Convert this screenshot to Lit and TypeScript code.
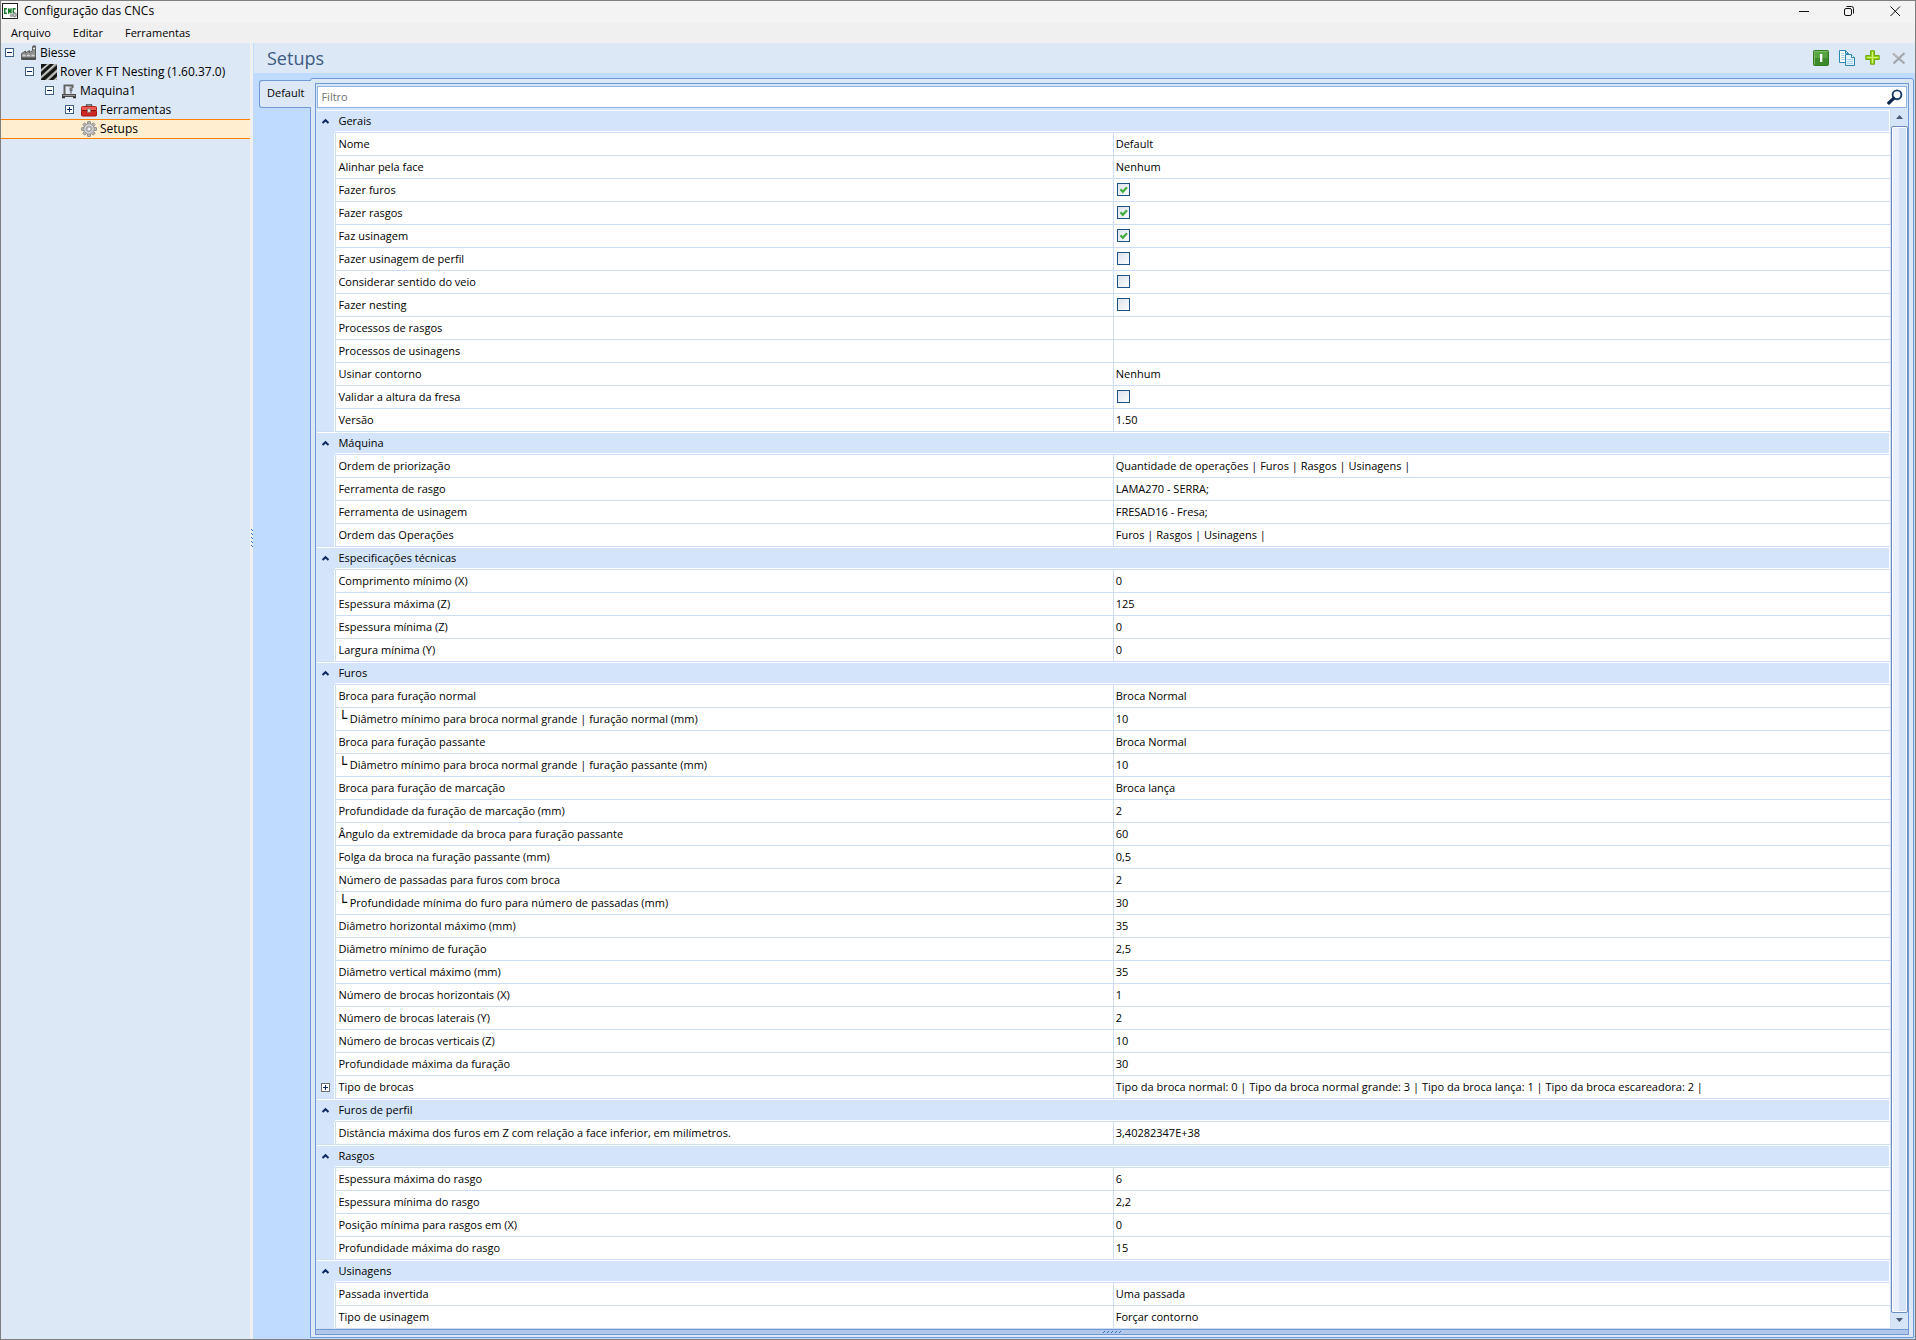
import { LitElement, html, css, svg, nothing } from "lit";
import { customElement, property, state } from "lit/decorators.js";
import { classMap } from "lit/directives/class-map.js";

type Value = string | boolean;
interface Row {
  name: string;
  value: Value;
  expandable?: boolean;
}
interface Group {
  title: string;
  rows: Row[];
}

const r = (name: string, value: Value = "", expandable = false): Row => ({ name, value, expandable });

const GROUPS: Group[] = [
  {
    title: "Gerais",
    rows: [
      r("Nome", "Default"),
      r("Alinhar pela face", "Nenhum"),
      r("Fazer furos", true),
      r("Fazer rasgos", true),
      r("Faz usinagem", true),
      r("Fazer usinagem de perfil", false),
      r("Considerar sentido do veio", false),
      r("Fazer nesting", false),
      r("Processos de rasgos"),
      r("Processos de usinagens"),
      r("Usinar contorno", "Nenhum"),
      r("Validar a altura da fresa", false),
      r("Versão", "1.50"),
    ],
  },
  {
    title: "Máquina",
    rows: [
      r("Ordem de priorização", "Quantidade de operações | Furos | Rasgos | Usinagens |"),
      r("Ferramenta de rasgo", "LAMA270 - SERRA;"),
      r("Ferramenta de usinagem", "FRESAD16 - Fresa;"),
      r("Ordem das Operações", "Furos | Rasgos | Usinagens |"),
    ],
  },
  {
    title: "Especificações técnicas",
    rows: [
      r("Comprimento mínimo (X)", "0"),
      r("Espessura máxima (Z)", "125"),
      r("Espessura mínima (Z)", "0"),
      r("Largura mínima (Y)", "0"),
    ],
  },
  {
    title: "Furos",
    rows: [
      r("Broca para furação normal", "Broca Normal"),
      r("└ Diâmetro mínimo para broca normal grande | furação normal (mm)", "10"),
      r("Broca para furação passante", "Broca Normal"),
      r("└ Diâmetro mínimo para broca normal grande | furação passante (mm)", "10"),
      r("Broca para furação de marcação", "Broca lança"),
      r("Profundidade da furação de marcação (mm)", "2"),
      r("Ângulo da extremidade da broca para furação passante", "60"),
      r("Folga da broca na furação passante (mm)", "0,5"),
      r("Número de passadas para furos com broca", "2"),
      r("└ Profundidade mínima do furo para número de passadas (mm)", "30"),
      r("Diâmetro horizontal máximo (mm)", "35"),
      r("Diâmetro mínimo de furação", "2,5"),
      r("Diâmetro vertical máximo (mm)", "35"),
      r("Número de brocas horizontais (X)", "1"),
      r("Número de brocas laterais (Y)", "2"),
      r("Número de brocas verticais (Z)", "10"),
      r("Profundidade máxima da furação", "30"),
      r(
        "Tipo de brocas",
        "Tipo da broca normal: 0 | Tipo da broca normal grande: 3 | Tipo da broca lança: 1 | Tipo da broca escareadora: 2 |",
        true,
      ),
    ],
  },
  {
    title: "Furos de perfil",
    rows: [r("Distância máxima dos furos em Z com relação a face inferior, em milímetros.", "3,40282347E+38")],
  },
  {
    title: "Rasgos",
    rows: [
      r("Espessura máxima do rasgo", "6"),
      r("Espessura mínima do rasgo", "2,2"),
      r("Posição mínima para rasgos em (X)", "0"),
      r("Profundidade máxima do rasgo", "15"),
    ],
  },
  {
    title: "Usinagens",
    rows: [r("Passada invertida", "Uma passada"), r("Tipo de usinagem", "Forçar contorno")],
  },
];

/* ---------- icons, all on a 16 x 16 grid ---------- */

const GEAR_TEETH = [0, 45, 90, 135, 180, 225, 270, 315];

const ICONS = {
  app: svg`
    <rect x=".5" y=".5" width="15" height="15" fill="#fff" stroke="#222"/>
    <path d="M5 5.700H2.700v4.600H5M6.700 10.700V5.600l2.300 4.600V5.300M13.600 5.700h-2.300v4.200h2" fill="none" stroke="#157a2b" stroke-width="1.400"/>
    <circle cx="9.500" cy="12.400" r="1.700" fill="#aaa"/>
    <circle cx="12.600" cy="12" r="2.400" fill="#999"/><circle cx="12.600" cy="12" r=".8" fill="#eee"/>`,
  factory: svg`
    <path d="M.5 14.500V8.500l4-2.500v2l4-2.500v2l3-1.800V1.500h3v13z" fill="#909090" stroke="#5c5c5c"/>
    <path d="M1.500 10.500h3M6 10.500h3M10.500 10.500h3" stroke="#d8d8d8" stroke-width="1.500"/>
    <path d="M1 13.500h14" stroke="#4a4a4a" stroke-width="2"/>
    <path d="M12 3.500h2" stroke="#f0f0f0"/><path d="M12 .6h2.800" stroke="#888"/>`,
  stripes: svg`
    <rect width="16" height="16" fill="#9aa09a"/>
    <path d="M0 0h6L0 5zM0 8 9 0h4L0 12zM0 15 16 1v4L4 16H0zM8 16 16 8.500v4L12 16z" fill="#151515"/>
    <path d="M0 6.500 7.500 0M0 13 14.500 0M6 16 16 6.800M14 16l2-1.800" stroke="#e4e8e4" stroke-width=".8"/>`,
  machine: svg`
    <path d="M3.500 12V2.500h8V5" fill="none" stroke="#626262" stroke-width="2"/>
    <path d="M5 3.500h1.500V11H5z" fill="#e9e9e9"/>
    <rect x="8.500" y="4.500" width="3" height="3.500" fill="#777"/><path d="M10 8v2.500" stroke="#444"/>
    <rect x="1.500" y="11.500" width="13" height="2" fill="#9a9a9a" stroke="#4c4c4c"/>
    <path d="M1 14.500h3M12 14.500h3" stroke="#333" stroke-width="1.500"/>`,
  toolbox: svg`
    <path d="M5.500 5V2.800h5V5" fill="none" stroke="#4b4b4b" stroke-width="1.300"/>
    <rect x=".5" y="4.500" width="15" height="4.500" rx="1" fill="#ee5b52" stroke="#b3221f"/>
    <rect x=".5" y="8.500" width="15" height="5.500" rx="1" fill="#cf2823" stroke="#951a18"/>
    <path d="M1 8.600h14" stroke="#7f1412"/>
    <rect x="6.500" y="7" width="3" height="3.200" fill="#e8e8e8" stroke="#777" stroke-width=".7"/>`,
  gear: svg`
    ${GEAR_TEETH.map(
      (a) => svg`<rect x="6.500" y=".5" width="3" height="4" rx=".5" fill="#b9b9b9" stroke="#858585" stroke-width=".8" transform="rotate(${a} 8 8)"/>`,
    )}
    <circle cx="8" cy="8" r="5.200" fill="#bdbdbd" stroke="#8a8a8a" stroke-width=".8"/>
    <circle cx="8" cy="8" r="4" fill="none" stroke="#d4d4d4" stroke-width="1.400"/>
    <circle cx="8" cy="8" r="2.200" fill="#f1f3f7" stroke="#858585" stroke-width=".9"/>`,
  info: svg`
    <rect x=".5" y=".5" width="15" height="15" rx="1" fill="#3c8a2a" stroke="#2f7d1f"/>
    <rect x="1.500" y="1.500" width="13" height="6.500" fill="#58a344"/>
    <path d="M1.500 14.500v-13h13" fill="none" stroke="#8ac47a" stroke-width=".8"/>
    <rect x="7" y="4" width="2.300" height="8" fill="#fff"/>`,
  copy: svg`
    <path d="M.5.5h6l3 3v9h-9z" fill="#fff" stroke="#2a87b5"/>
    <path d="M6.500.5v3h3" fill="none" stroke="#2a87b5"/>
    <path d="M2 3.500h3M2 5.500h4M2 7.500h4M2 9.500h4" fill="none" stroke="#a9d5ea"/>
    <path d="M6.500 4.500h6l3 3v8h-9z" fill="#e3f2fa" stroke="#2a87b5"/>
    <path d="M12.500 4.500v3h3" fill="#fff" stroke="#2a87b5"/>
    <path d="M8 9.500h6M8 11.500h6M8 13.500h6" stroke="#a9d5ea"/>`,
  plus: svg`
    <path d="M5.500.8h4v4.700h4.700v4H9.500v4.700h-4V9.500H.8v-4h4.700z" fill="#93cf12" stroke="#6aa80c"/>
    <path d="M7.500 1.800v11.500M1.800 7.500h11.500" stroke="#d2f07a" stroke-width="1.200"/>`,
  remove: svg`
    <path d="M2 3.500 13.500 13.500M13.500 3 2.500 13.500" stroke="#a3a7ad" stroke-width="2.300"/>
    <path d="M2.500 3.500 7 7.500" stroke="#c3c7cd" stroke-width="1"/>`,
  search: svg`
    <circle cx="10" cy="5.800" r="4.400" fill="#fff" stroke="#1b3a66" stroke-width="1.900"/>
    <path d="M6.700 9.300 1.800 14" stroke="#10284c" stroke-width="3.200" stroke-linecap="round"/>`,
  minimize: svg`<path d="M4 8.500h10" stroke="#111"/>`,
  restore: svg`
    <rect x="3.500" y="5.500" width="7" height="7" rx="1.500" fill="none" stroke="#111"/>
    <path d="M5.500 3.500h5a2 2 0 0 1 2 2v5" fill="none" stroke="#111"/>`,
  close: svg`<path d="M3.500 3.500l9.500 9.500M13 3.500 3.500 13" stroke="#111"/>`,
};

type IconName = keyof typeof ICONS;

const icon = (name: IconName) =>
  html`<svg class="icon" viewBox="0 0 16 16" width="16" height="16" aria-hidden="true">${ICONS[name]}</svg>`;

const expander = (open: boolean) => html`
  <svg class="expander" viewBox="0 0 9 9" width="9" height="9" aria-hidden="true">
    <rect x=".5" y=".5" width="8" height="8" fill="#fff" stroke="currentColor" />
    <path d=${open ? "M2 4.500h5" : "M2 4.500h5M4.500 2v5"} stroke="#0b2a5c" fill="none" />
  </svg>
`;

const shared = css`
  * {
    box-sizing: border-box;
  }
  button {
    margin: 0;
    padding: 0;
    border: 0;
    background: none;
    font: inherit;
    color: inherit;
    text-align: left;
  }
  .icon,
  .expander {
    display: block;
    flex: none;
  }
`;

/* ---------- navigation tree ---------- */

interface Node {
  label: string;
  icon: IconName;
  level: number;
  open?: boolean;
}

const NODES: Node[] = [
  { label: "Biesse", icon: "factory", level: 0, open: true },
  { label: "Rover K FT Nesting (1.60.37.0)", icon: "stripes", level: 1, open: true },
  { label: "Maquina1", icon: "machine", level: 2, open: true },
  { label: "Ferramentas", icon: "toolbox", level: 3, open: false },
  { label: "Setups", icon: "gear", level: 3 },
];

@customElement("nav-tree")
export class NavTree extends LitElement {
  @state() private selected = "Setups";

  static styles = [
    shared,
    css`
      :host {
        display: block;
        background: #dde8f6;
      }
      .tree {
        margin: 0;
        padding: 0;
        list-style: none;
      }
      .node {
        display: flex;
        align-items: center;
        gap: 3px;
        width: 100%;
        height: 19px;
        padding-left: 4px;
        white-space: nowrap;
      }
      .selected {
        height: 20px;
        background: #ffefd0;
        border: solid #ff8000;
        border-width: 1px 0;
      }
      .toggle {
        width: 13px;
        color: #3d6186;
      }
      .l1 {
        padding-left: 24px;
      }
      .l2 {
        padding-left: 44px;
      }
      .l3 {
        padding-left: 64px;
      }
    `,
  ];

  render() {
    return html`<ul class="tree" role="tree">
      ${NODES.map(
        (n) => html`<li role="none">
          <button
            role="treeitem"
            aria-selected=${n.label === this.selected}
            class=${classMap({ node: true, [`l${n.level}`]: true, selected: n.label === this.selected })}
            @click=${() => (this.selected = n.label)}
          >
            <span class="toggle">${n.open === undefined ? nothing : expander(n.open)}</span>
            ${icon(n.icon)}
            <span>${n.label}</span>
          </button>
        </li>`,
      )}
    </ul>`;
  }
}

/* ---------- property grid ---------- */

@customElement("property-grid")
export class PropertyGrid extends LitElement {
  @property({ attribute: false }) groups: Group[] = [];
  @state() private closed = new Set<string>();

  static styles = [
    shared,
    css`
      :host {
        display: block;
        background: #fff;
        font-size: 11px;
        line-height: 16px;
      }
      table {
        width: 100%;
        table-layout: fixed;
        border-collapse: separate;
        border-spacing: 0;
      }
      .gutter-col {
        width: 18px;
      }
      th,
      td {
        height: 23px;
        padding: 0;
        font-weight: normal;
        text-align: left;
        white-space: nowrap;
        border-bottom: 1px solid #ccddf4;
      }
      .gutter {
        background: #d4e5fb;
        border-right: 1px solid #fff;
        border-bottom-color: #d4e5fb;
      }
      .gutter button,
      .gutter .expander {
        display: block;
        margin-left: 4px;
        color: #6c6c6c;
      }
      .chevron {
        display: block;
      }
      .group {
        background: #d4e5fb;
        box-shadow: inset 0 1px #fff;
      }
      .group-title {
        border-right: 1px solid #fff;
        box-shadow:
          inset 0 1px #fff,
          inset 0 -1px #fff;
        padding-left: 3px;
      }
      .group.gutter {
        border-right: 0;
      }
      .name,
      .value {
        border-left: 1px solid #ccddf4;
        padding-left: 2px;
      }
      .last {
        border-bottom-color: #ccddf4;
      }
      .corner {
        font: 14px/1 "DejaVu Sans", sans-serif;
      }
      input {
        appearance: none;
        display: block;
        width: 13px;
        height: 13px;
        margin: 0;
        border: 1px solid #1d5287;
        background: linear-gradient(135deg, #dde2ec, #fbfcfd);
      }
      .check {
        display: grid;
        justify-content: start;
        padding: 0 0 1px 1px;
      }
      .check > * {
        grid-area: 1 / 1;
      }
      .tick {
        display: block;
        pointer-events: none;
      }
    `,
  ];

  private toggle(title: string) {
    const next = new Set(this.closed);
    if (!next.delete(title)) next.add(title);
    this.closed = next;
  }

  private renderName(row: Row, id: string) {
    if (typeof row.value === "boolean") return html`<label for=${id}>${row.name}</label>`;
    if (row.name.startsWith("└")) return html`<span class="corner">└</span>${row.name.slice(1)}`;
    return row.name;
  }

  private renderValue(row: Row, id: string) {
    if (typeof row.value === "string") return row.value;
    return html`<span class="check"
      ><input type="checkbox" id=${id} .checked=${row.value} />${row.value
        ? html`<svg class="tick" width="13" height="13" viewBox="0 0 13 13" aria-hidden="true">
            <path d="M3.500 6.300 5.800 8.800 10 4.200" fill="none" stroke="#43ad3f" stroke-width="2.200" />
          </svg>`
        : nothing}</span
    >`;
  }

  render() {
    return html`<table>
      <colgroup>
        <col class="gutter-col" />
        <col />
        <col />
      </colgroup>
      ${this.groups.map((g, gi) => {
        const open = !this.closed.has(g.title);
        return html`<tbody>
          <tr>
            <td class="group gutter">
              <button aria-label=${g.title} aria-expanded=${open} @click=${() => this.toggle(g.title)}>
                <svg class="chevron" viewBox="0 0 9 9" width="9" height="9" aria-hidden="true">
                  <path
                    d=${open ? "M1.500 6 4.500 3.200 7.500 6" : "M1.500 3.200 4.500 6 7.500 3.200"}
                    fill="none"
                    stroke="#0b2a66"
                    stroke-width="2"
                  />
                </svg>
              </button>
            </td>
            <th class="group group-title" colspan="2" scope="rowgroup">${g.title}</th>
          </tr>
          ${open
            ? g.rows.map((row, ri) => {
                const id = `p${gi}-${ri}`;
                const last = ri === g.rows.length - 1;
                return html`<tr>
                  <td class=${classMap({ gutter: true, last })}>${row.expandable ? expander(false) : nothing}</td>
                  <th class="name" scope="row">${this.renderName(row, id)}</th>
                  <td class="value">${this.renderValue(row, id)}</td>
                </tr>`;
              })
            : nothing}
        </tbody>`;
      })}
    </table>`;
  }
}

/* ---------- window ---------- */

@customElement("app-root")
export class AppRoot extends LitElement {
  static styles = [
    shared,
    css`
      :host {
        display: flex;
        flex-direction: column;
        min-height: 100vh;
        box-sizing: border-box;
        border: 1px solid #7f7f7f;
        background: #f0f0f0;
        color: #000;
        font: 12px/16px "Open Sans", "Noto Sans", sans-serif;
      }
      .titlebar {
        display: flex;
        align-items: center;
        gap: 6px;
        height: 22px;
        padding: 0 12px 2px 1px;
        background: #f3f3f3;
      }
      .title {
        flex: 1;
        margin: 0;
        font: inherit;
      }
      .controls {
        display: flex;
        gap: 30px;
      }
      .menu {
        display: flex;
        gap: 22px;
        height: 20px;
        padding: 1px 10px;
        font-size: 11px;
      }
      .main {
        display: flex;
        flex: 1;
      }
      nav-tree {
        flex: 0 0 249px;
      }
      .splitter {
        display: flex;
        flex: 0 0 3px;
        flex-direction: column;
      }
      .splitter::before {
        content: "";
        flex: 38;
      }
      .splitter::after {
        content: "";
        flex: 62;
      }
      .content {
        display: flex;
        flex: 1;
        flex-direction: column;
        min-width: 0;
        background: #bfdbff;
      }
      .header {
        display: flex;
        align-items: center;
        height: 30px;
        margin-left: 1px;
        padding: 0 8px 0 13px;
        background: #dde8f6;
      }
      .heading {
        flex: 1;
        margin: 0;
        font-size: 18px;
        font-weight: normal;
        line-height: 28px;
        color: #3b5a82;
      }
      .tools {
        display: flex;
        gap: 10px;
      }
      .tabs {
        display: flex;
        flex: 1;
        padding: 5px 1px 1px 6px;
      }
      .tab {
        z-index: 1;
        height: 28px;
        margin: 2px -1px 0 0;
        padding: 0 7px 2px;
        background: #dde8f6;
        border: 1px solid #6f9ad6;
        border-right: 0;
        border-radius: 3px 0 0 3px;
        font-size: 11px;
      }
      .panel {
        display: flex;
        flex: 1;
        min-width: 0;
        padding: 4px 4px 2px;
        background: #dde8f6;
        border: 1px solid #6f9ad6;
        border-radius: 2px 3px 0 0;
      }
      .frame {
        display: flex;
        flex: 1;
        flex-direction: column;
        min-width: 0;
        background: #d6e5f8;
        border: 1px solid #6f9ad6;
      }
      .filter {
        display: flex;
        align-items: center;
        height: 22px;
        margin: 2px 1px;
        padding: 0 3px 1px;
        background: #fff;
        border: 1px solid #92b4e4;
      }
      .filter input {
        flex: 1;
        min-width: 0;
        height: 17px;
        padding: 0;
        border: 0;
        outline: 0;
        font: inherit;
        font-size: 11px;
        color: #111;
      }
      .filter input::placeholder {
        color: #707070;
        opacity: 1;
      }
      .body {
        display: flex;
        flex: 1;
        padding-left: 1px;
      }
      property-grid {
        flex: 1;
        min-width: 0;
        border-right: 1px solid #ccddf4;
      }
      .scroll {
        display: flex;
        flex: 0 0 17px;
        flex-direction: column;
        background: #d6e4f7;
      }
      .arrow {
        display: grid;
        place-items: center;
        height: 16px;
        padding-bottom: 2px;
      }
      .thumb {
        flex: 1;
        background: linear-gradient(90deg, #e9f0fb 45%, #d6e3f6 45%);
        border: 1px solid #6b8cc0;
        border-radius: 2px;
        box-shadow: inset 0 0 0 1px #fff;
      }
      .strip {
        display: grid;
        place-items: center;
        height: 5px;
        background: #b0c7e9;
        border-top: 1px solid #6f9ad6;
      }
      .grip {
        display: block;
      }
    `,
  ];

  render() {
    return html`
      <header class="titlebar">
        ${icon("app")}
        <h1 class="title">Configuração das CNCs</h1>
        <div class="controls">
          <button aria-label="Minimizar">${icon("minimize")}</button>
          <button aria-label="Restaurar">${icon("restore")}</button>
          <button aria-label="Fechar">${icon("close")}</button>
        </div>
      </header>
      <nav class="menu">
        <button>Arquivo</button>
        <button>Editar</button>
        <button>Ferramentas</button>
      </nav>
      <main class="main">
        <nav-tree></nav-tree>
        <div class="splitter">
          <svg class="grip" width="3" height="20" aria-hidden="true">
            <path d="M1 1.500h1M2 2.500h1M1 5.500h1M2 6.500h1M1 9.500h1M2 10.500h1M1 13.500h1M2 14.500h1M1 17.500h1M2 18.500h1" stroke="#2c6fc4" />
          </svg>
        </div>
        <section class="content">
          <div class="header">
            <h2 class="heading">Setups</h2>
            <div class="tools">
              <button aria-label="Ativar">${icon("info")}</button>
              <button aria-label="Copiar">${icon("copy")}</button>
              <button aria-label="Adicionar">${icon("plus")}</button>
              <button aria-label="Remover" disabled>${icon("remove")}</button>
            </div>
          </div>
          <div class="tabs">
            <button class="tab" role="tab" aria-selected="true">Default</button>
            <div class="panel">
              <div class="frame">
                <div class="filter">
                  <input type="text" aria-label="Filtro" placeholder="Filtro" />
                  <button aria-label="Pesquisar">${icon("search")}</button>
                </div>
                <div class="body">
                  <property-grid .groups=${GROUPS}></property-grid>
                  <div class="scroll">
                    <button class="arrow" aria-label="Rolar para cima">
                      <svg width="7" height="4" aria-hidden="true"><path d="M0 4 3.500 0 7 4z" fill="#4a5878" /></svg>
                    </button>
                    <div class="thumb"></div>
                    <button class="arrow" aria-label="Rolar para baixo">
                      <svg width="7" height="4" aria-hidden="true"><path d="M0 0 3.500 4 7 0z" fill="#4a5878" /></svg>
                    </button>
                  </div>
                </div>
                <div class="strip">
                  <svg class="grip" width="19" height="3" aria-hidden="true">
                    <path d="M0 1.500h1M1 .5h1M4 1.500h1M5 .5h1M8 1.500h1M9 .5h1M12 1.500h1M13 .5h1M16 1.500h1M17 .5h1" stroke="#2c6fc4" />
                  </svg>
                </div>
              </div>
            </div>
          </div>
        </section>
      </main>
    `;
  }
}
